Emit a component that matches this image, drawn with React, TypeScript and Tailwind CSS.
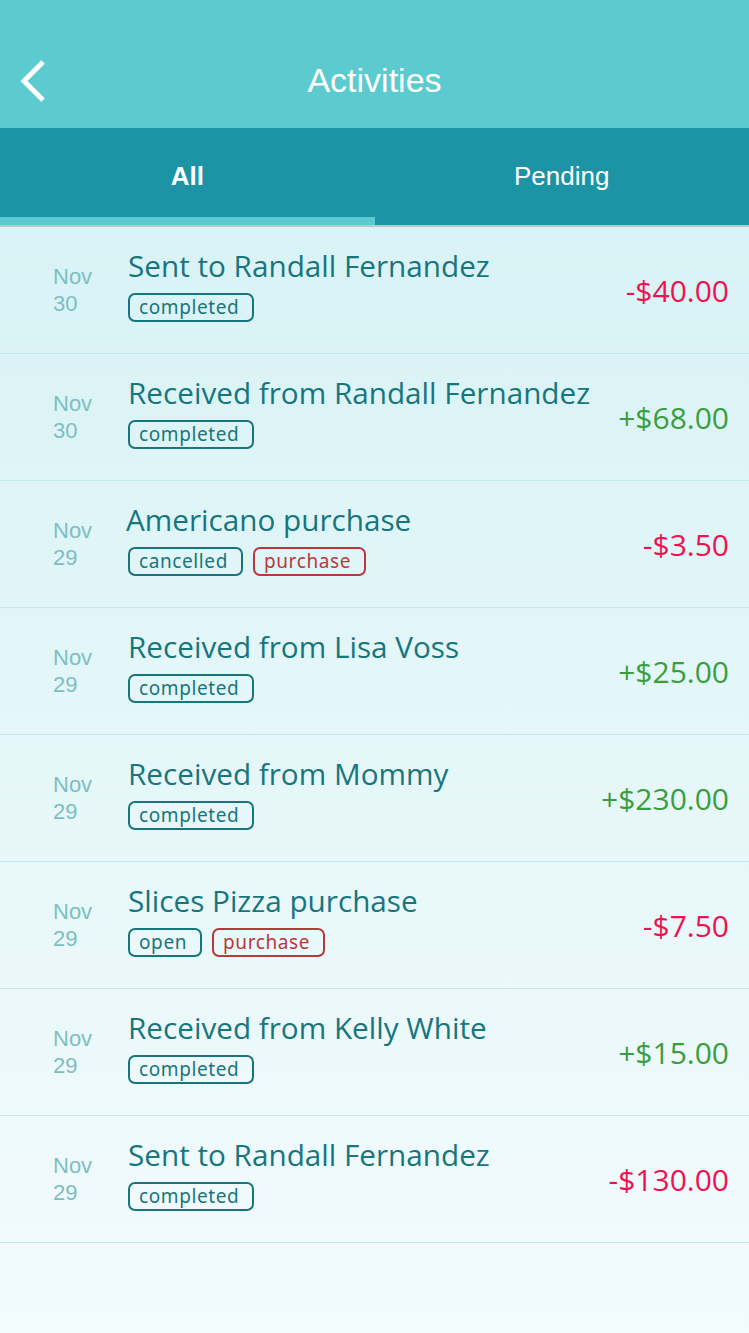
import React from "react";

type Tag = { label: string; kind: "teal" | "red" };
type Item = { date: [string, string]; title: string; tags: Tag[]; amount: string; positive: boolean };

const items: Item[] = [
  { date: ["Nov", "30"], title: "Sent to Randall Fernandez", tags: [{ label: "completed", kind: "teal" }], amount: "-$40.00", positive: false },
  { date: ["Nov", "30"], title: "Received from Randall Fernandez", tags: [{ label: "completed", kind: "teal" }], amount: "+$68.00", positive: true },
  { date: ["Nov", "29"], title: "Americano purchase", tags: [{ label: "cancelled", kind: "teal" }, { label: "purchase", kind: "red" }], amount: "-$3.50", positive: false },
  { date: ["Nov", "29"], title: "Received from Lisa Voss", tags: [{ label: "completed", kind: "teal" }], amount: "+$25.00", positive: true },
  { date: ["Nov", "29"], title: "Received from Mommy", tags: [{ label: "completed", kind: "teal" }], amount: "+$230.00", positive: true },
  { date: ["Nov", "29"], title: "Slices Pizza purchase", tags: [{ label: "open", kind: "teal" }, { label: "purchase", kind: "red" }], amount: "-$7.50", positive: false },
  { date: ["Nov", "29"], title: "Received from Kelly White", tags: [{ label: "completed", kind: "teal" }], amount: "+$15.00", positive: true },
  { date: ["Nov", "29"], title: "Sent to Randall Fernandez", tags: [{ label: "completed", kind: "teal" }], amount: "-$130.00", positive: false },
];

export default function App() {
  return (
    <div className="w-[749px] h-[1333px] flex flex-col overflow-hidden bg-gradient-to-b from-[#d3f1f4] to-[#f3fbfd]">
      <div className="h-[128px] bg-[#5ccbcf] relative flex justify-center pt-[60px] shrink-0">
        <svg className="absolute left-[18px] top-[59px]" width="30" height="44" viewBox="0 0 30 44">
          <path d="M25 3 L6 22 L25 41" fill="none" stroke="white" strokeWidth="5" strokeLinecap="butt" strokeLinejoin="miter" />
        </svg>
        <span className="text-white text-[34px] leading-[40px] font-['Liberation_Sans',sans-serif]">Activities</span>
      </div>
      <div className="bg-[#1d93a6] shrink-0">
        <div className="flex h-[89px] items-center pt-[8px]">
          <div className="w-1/2 text-center text-white text-[26px] font-bold font-['Liberation_Sans',sans-serif]">All</div>
          <div className="w-1/2 text-center text-white text-[26px] font-['Liberation_Sans',sans-serif]">Pending</div>
        </div>
        <div className="h-[8px] w-[375px] bg-[#5ccbcf]" />
      </div>
      <div className="h-[2px] bg-[#b7c9cc] shrink-0" />
      <div className="flex flex-col">
        {items.map((it, i) => (
          <div key={i} className="h-[127px] border-b border-[#c4e8ec] flex items-center">
            <div className="w-[128px] pl-[53px] text-[#7dbfc1] text-[22px] leading-[27px] font-['Liberation_Sans',sans-serif]">
              <div>{it.date[0]}</div>
              <div>{it.date[1]}</div>
            </div>
            <div className={i === 2 ? "flex-1 flex flex-col pb-[10px] -ml-[2px]" : "flex-1 flex flex-col pb-[10px]"}>
              <div className="text-[#17767d] text-[29.7px] leading-[36px] font-['Open_Sans',sans-serif] whitespace-nowrap">{it.title}</div>
              <div className={i === 2 ? "flex gap-[10px] mt-[9px] ml-[2px]" : "flex gap-[10px] mt-[9px]"}>
                {it.tags.map((t, j) => (
                  <span
                    key={j}
                    className={
                      t.kind === "teal"
                        ? "h-[29px] pl-[9px] pr-[13px] border-2 border-[#17767d] rounded-[7px] text-[#17767d] text-[19px] leading-[24px] font-['Noto_Sans',sans-serif] tracking-[0.6px]"
                        : "h-[29px] pl-[9px] pr-[13px] border-2 border-[#b8393c] rounded-[7px] text-[#b8393c] text-[19px] leading-[24px] font-['Noto_Sans',sans-serif] tracking-[0.6px]"
                    }
                  >
                    {t.label}
                  </span>
                ))}
              </div>
            </div>
            <div
              className={
                it.positive
                  ? "pr-[20px] text-[30px] font-['Open_Sans',sans-serif] text-[#3a9e3e]"
                  : "pr-[20px] text-[30px] font-['Open_Sans',sans-serif] text-[#f0124f]"
              }
            >
              {it.amount}
            </div>
          </div>
        ))}
      </div>
    </div>
  );
}
